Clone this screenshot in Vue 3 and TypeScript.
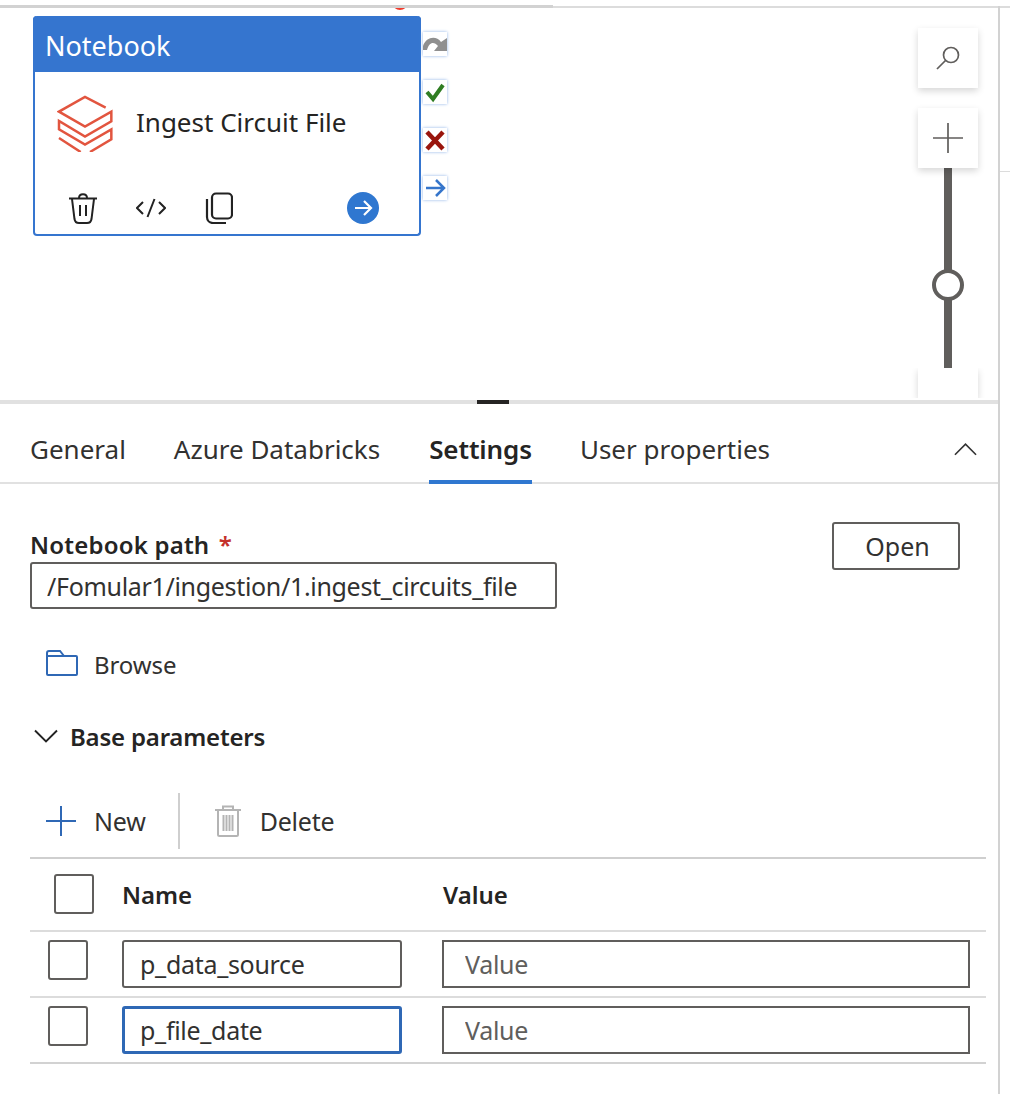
<script setup lang="ts">
const tabs = [
  { label: 'General', active: false },
  { label: 'Azure Databricks', active: false },
  { label: 'Settings', active: true },
  { label: 'User properties', active: false },
]
const rows = [
  { name: 'p_data_source', focused: false },
  { name: 'p_file_date', focused: true },
]
</script>

<template>
  <div class="app">
    <section class="canvas">
      <div class="line-top-a"></div>
      <div class="line-top-b"></div>
      <div class="red-dot"></div>
      <div class="line-stub"></div>

      <article class="card">
        <header class="card-head">Notebook</header>
        <div class="card-body">
          <svg class="logo" viewBox="51 45 168 171" width="56" height="57" fill="none" stroke="#e2553f" stroke-width="7.500">
            <path d="M197 83 135 51 57 95 135 140 214 95V124L135 170 57 123V148L135 194 214 148V178L150 216M57 174 122 216" />
          </svg>
          <span class="card-title">Ingest Circuit File</span>
        </div>
        <div class="card-actions">
          <svg class="act trash" viewBox="0 0 30 32" width="30" height="32" fill="none" stroke="#222" stroke-width="2">
            <path d="M1 6.500H29M11 6C11 1 19 1 19 6M4 7 6.500 27C7 30 9 31 11 31H19C21 31 23 30 23.500 27L26 7M12 13V24M18 13V24" />
          </svg>
          <svg class="act code" viewBox="0 0 30 32" width="30" height="32" fill="none" stroke="#222" stroke-width="2">
            <path d="M7 10 1 16 7 22M23 10 29 16 23 22M18.500 7 11.500 25" />
          </svg>
          <svg class="act copy" viewBox="0 0 28 32" width="28" height="32" fill="none" stroke="#222" stroke-width="2.200">
            <rect x="7" y="1.500" width="20" height="25" rx="4" />
            <path d="M2 7V25C2 28.500 4.500 31 8 31H21" />
          </svg>
          <span class="go">
            <svg viewBox="0 0 32 32" width="32" height="32" fill="none" stroke="#fff" stroke-width="2.200">
              <path d="M8 16H24M17 9 24 16 17 23" />
            </svg>
          </span>
        </div>
      </article>

      <div class="port p1">
        <svg viewBox="0 0 24 24" width="24" height="24">
          <path d="M0 18V14C3 5 13 3 18 10L24 6V19H11L15 14C11 9 6 10 4 18Z" fill="#8f8f8f" />
        </svg>
      </div>
      <div class="port p2">
        <svg viewBox="0 0 24 24" width="24" height="24" fill="none" stroke="#2f7d22" stroke-width="4">
          <path d="M4 12 10 19 20 5" />
        </svg>
      </div>
      <div class="port p3">
        <svg viewBox="0 0 24 24" width="24" height="24" fill="none" stroke="#99150d" stroke-width="4.500">
          <path d="M4 4 20 21M20 4 4 21" />
        </svg>
      </div>
      <div class="port p4">
        <svg viewBox="0 0 24 24" width="24" height="24" fill="none" stroke="#3575cb" stroke-width="2.500">
          <path d="M3 12H21M13 4 21 12 13 20" />
        </svg>
      </div>

      <button class="tool search">
        <svg viewBox="0 0 30 30" width="30" height="30" fill="none" stroke="#605e5c" stroke-width="1.700">
          <circle cx="18" cy="12" r="7.500" />
          <path d="M12.500 17.500 4 26" />
        </svg>
      </button>
      <button class="tool plus">
        <svg viewBox="0 0 30 30" width="30" height="30" fill="none" stroke="#605e5c" stroke-width="1.700">
          <path d="M0 15H30M15 0V30" />
        </svg>
      </button>
      <div class="track"></div>
      <div class="knob"></div>
      <div class="tool minus"></div>
    </section>

    <section class="panel">
      <div class="splitter"><span class="handle"></span></div>
      <nav class="tabs">
        <span v-for="t in tabs" :key="t.label" class="tab" :class="{ active: t.active }">{{ t.label }}</span>
        <svg class="collapse" viewBox="0 0 24 14" width="23" height="14" fill="none" stroke="#333" stroke-width="1.700">
          <path d="M1 13 12 2 23 13" />
        </svg>
      </nav>

      <div class="form">
        <div class="path-row">
          <div class="path-field">
            <label class="label">Notebook path <i>*</i></label>
            <input class="box path" value="/Fomular1/ingestion/1.ingest_circuits_file" readonly />
          </div>
          <button class="open">Open</button>
        </div>

        <div class="browse">
          <svg viewBox="0 0 32 26" width="32" height="26" fill="none" stroke="#2f68b5" stroke-width="2">
            <path d="M1 6V3C1 2 2 1 3 1H14L18 6M1 6H30C30.600 6 31 6.400 31 7V24C31 24.600 30.600 25 30 25H2C1.400 25 1 24.600 1 24V6" />
          </svg>
          <span class="browse-text">Browse</span>
        </div>

        <div class="section-title">
          <svg viewBox="0 0 24 14" width="24" height="14" fill="none" stroke="#222" stroke-width="1.900">
            <path d="M1 1.500 12 12.500 23 1.500" />
          </svg>
          <span>Base parameters</span>
        </div>

        <div class="toolbar">
          <div class="tb-item new">
            <svg viewBox="0 0 30 30" width="30" height="30" fill="none" stroke="#2f68b5" stroke-width="2">
              <path d="M0 15H30M15 0V30" />
            </svg>
            <span>New</span>
          </div>
          <span class="tb-sep"></span>
          <div class="tb-item del">
            <svg viewBox="0 0 26 32" width="26" height="32" fill="none" stroke="#b4b4b4" stroke-width="2">
              <path d="M0 5H26M8 5V1.500H18V5M3 5V29.500C3 30.400 3.600 31 4.500 31H21.500C22.400 31 23 30.400 23 29.500V5M8.500 10V26M11.500 10V26M14.500 10V26M17.500 10V26" />
            </svg>
            <span>Delete</span>
          </div>
        </div>

        <div class="table">
          <div class="t-row t-head">
            <span class="check head-check"></span>
            <span class="th name-col">Name</span>
            <span class="th">Value</span>
          </div>
          <div v-for="r in rows" :key="r.name" class="t-row t-body">
            <span class="check"></span>
            <input class="box name-input" :class="{ focused: r.focused }" :value="r.name" readonly />
            <input class="box value-input" placeholder="Value" readonly />
          </div>
        </div>
      </div>
    </section>
  </div>
</template>

<style>
html, body { margin: 0; background: #fff; }
</style>

<style scoped>
.app {
  width: 1010px;
  height: 1094px;
  position: relative;
  overflow: hidden;
  background: #fff;
  font-family: "Noto Sans", "Open Sans", sans-serif;
  color: #323130;
}
.app::after {
  content: "";
  position: absolute;
  left: 998px;
  top: 6px;
  bottom: 0;
  width: 2px;
  background: #d2d2d2;
}
.canvas { height: 400px; position: relative; overflow: hidden; }
.line-top-a { position: absolute; left: 0; top: 5px; width: 553px; height: 3px; background: #d2d2d2; }
.line-top-b { position: absolute; left: 553px; top: 6px; right: 0; height: 2px; background: #dcdcdc; }
.line-stub { position: absolute; left: 1000px; top: 171px; right: 0; height: 1px; background: #dcdcdc; }
.red-dot { position: absolute; left: 392px; top: -6px; width: 16px; height: 16px; border-radius: 50%; background: #f0392b; clip-path: inset(14px 0 0 0); }

.card {
  position: absolute;
  left: 33px;
  top: 16px;
  width: 388px;
  height: 220px;
  box-sizing: border-box;
  border: 2px solid #3575cf;
  border-top: 0;
  border-radius: 4px;
  background: #fff;
  display: flex;
  flex-direction: column;
}
.card-head {
  height: 56px;
  margin: 0 -2px;
  padding-left: 12px;
  background: #3575cf;
  border-radius: 4px 4px 0 0;
  color: #fff;
  font-size: 27px;
  line-height: 60px;
  flex: none;
}
.card-body { display: flex; align-items: center; padding: 23px 0 0 22px; gap: 23px; }
.logo { flex: none; }
.card-title { font-size: 26px; color: #252423; position: relative; top: -2px; }
.card-actions { display: flex; align-items: flex-start; padding: 40px 0 0 33px; }
.act { flex: none; }
.code { margin-left: 38px; }
.copy { margin-left: 39px; }
.go { margin-left: 114px; width: 32px; height: 32px; border-radius: 50%; background: #2f77d0; display: block; }
.go svg { display: block; }

.port {
  position: absolute;
  left: 423px;
  width: 24px;
  height: 24px;
  background: #fff;
  box-shadow: 0 0 3px #8fb4e8;
}
.port svg { display: block; }
.p1 { top: 32px; }
.p2 { top: 80px; }
.p3 { top: 128px; }
.p4 { top: 176px; }

.tool {
  position: absolute;
  left: 918px;
  width: 60px;
  height: 60px;
  padding: 15px;
  border: 0;
  box-sizing: border-box;
  background: #fff;
  box-shadow: 0 3px 7px rgba(0, 0, 0, 0.16);
}
.tool svg { display: block; }
.search { top: 28px; }
.plus { top: 108px; z-index: 1; }
.minus { top: 368px; z-index: 1; height: 24px; clip-path: inset(0 -10px 0 -10px); }
.track { position: absolute; left: 944px; top: 168px; width: 8px; height: 200px; background: #605e5c; }
.knob {
  position: absolute;
  left: 932px;
  top: 269px;
  width: 32px;
  height: 32px;
  box-sizing: border-box;
  border: 4px solid #605e5c;
  border-radius: 50%;
  background: #fff;
}

.panel { width: 998px; }
.splitter { height: 4px; background: #e1e1e1; position: relative; }
.handle { position: absolute; left: 477px; top: 0; width: 32px; height: 4px; background: #252423; }

.tabs {
  height: 80px;
  box-sizing: border-box;
  padding-left: 30px;
  display: flex;
  gap: 48px;
  border-bottom: 2px solid #e1e1e1;
  position: relative;
}
.tab {
  height: 80px;
  box-sizing: border-box;
  line-height: 90px;
  font-size: 26px;
  color: #323130;
  white-space: nowrap;
}
.tab.active { font-weight: 600; color: #252423; border-bottom: 4px solid #2f77d0; letter-spacing: -0.12px; margin-left: 1px; }
.collapse { position: absolute; left: 954px; top: 38px; }

.form { padding: 0 12px 0 30px; }
.path-row { display: flex; align-items: flex-start; justify-content: space-between; padding: 38px 26px 0 0; }
.label { display: block; font-size: 24px; font-weight: 600; color: #252423; line-height: 26px; height: 30px; margin-top: 10px; letter-spacing: 0.2px; }
.label i { font-style: normal; color: #c4312b; font-weight: 600; margin-left: 3px; }
.box {
  display: block;
  box-sizing: border-box;
  height: 48px;
  border: 2px solid #605e5c;
  border-radius: 3px;
  font-family: inherit;
  font-size: 25px;
  letter-spacing: -0.3px;
  color: #323130;
  outline: 0;
  background: #fff;
  padding: 0 16px;
}
.box::placeholder { color: #605e5c; opacity: 1; }
.path { width: 527px; height: 47px; margin-top: 0; padding: 0 15px; letter-spacing: -0.32px; }
.open {
  width: 128px;
  height: 48px;
  background: #fff;
  border: 2px solid #605e5c;
  border-radius: 3px;
  font-family: inherit;
  font-size: 25px;
  color: #323130;
  padding: 0 0 0 3px;
}
.browse { display: flex; align-items: center; gap: 16px; padding: 41px 0 0 16px; font-size: 24px; height: 26px; letter-spacing: -0.1px; }
.browse svg { flex: none; }
.browse-text { padding-top: 2px; }
.section-title { display: flex; align-items: center; gap: 12px; margin-top: 46px; padding-left: 4px; height: 28px; font-size: 24px; font-weight: 600; color: #252423; letter-spacing: -0.2px; }
.toolbar { display: flex; align-items: center; height: 56px; margin-top: 43px; font-size: 25px; color: #323130; letter-spacing: -0.2px; }
.tb-item { display: flex; align-items: center; }
.new { gap: 18px; padding-left: 16px; }
.tb-sep { width: 2px; height: 56px; background: #cfcfcf; margin: 0 35px 0 32px; }
.del { gap: 19px; }

.table { margin-top: 8px; width: 956px; border-top: 2px solid #cfcfcf; }
.t-row {
  display: grid;
  grid-template-columns: 92px 320px 528px;
  border-bottom: 2px solid #dcdcdc;
  box-sizing: border-box;
}
.t-head { height: 73px; align-items: center; grid-template-columns: 92px 321px 528px; }
.t-body { height: 66px; padding-top: 8px; }
.t-body:last-child { border-bottom-color: #d2d2d2; }
.check {
  display: block;
  box-sizing: border-box;
  width: 40px;
  height: 40px;
  border: 2px solid #605e5c;
  border-radius: 3px;
  margin-left: 18px;
}
.head-check { margin-left: 24px; margin-top: -2px; }
.th { font-size: 24px; font-weight: 600; color: #252423; }
.name-input { width: 280px; }
.name-input.focused { border: 3px solid #2f68b5; padding: 0 15px; }
.value-input { width: 528px; border-radius: 0; padding-left: 21px; }
</style>
